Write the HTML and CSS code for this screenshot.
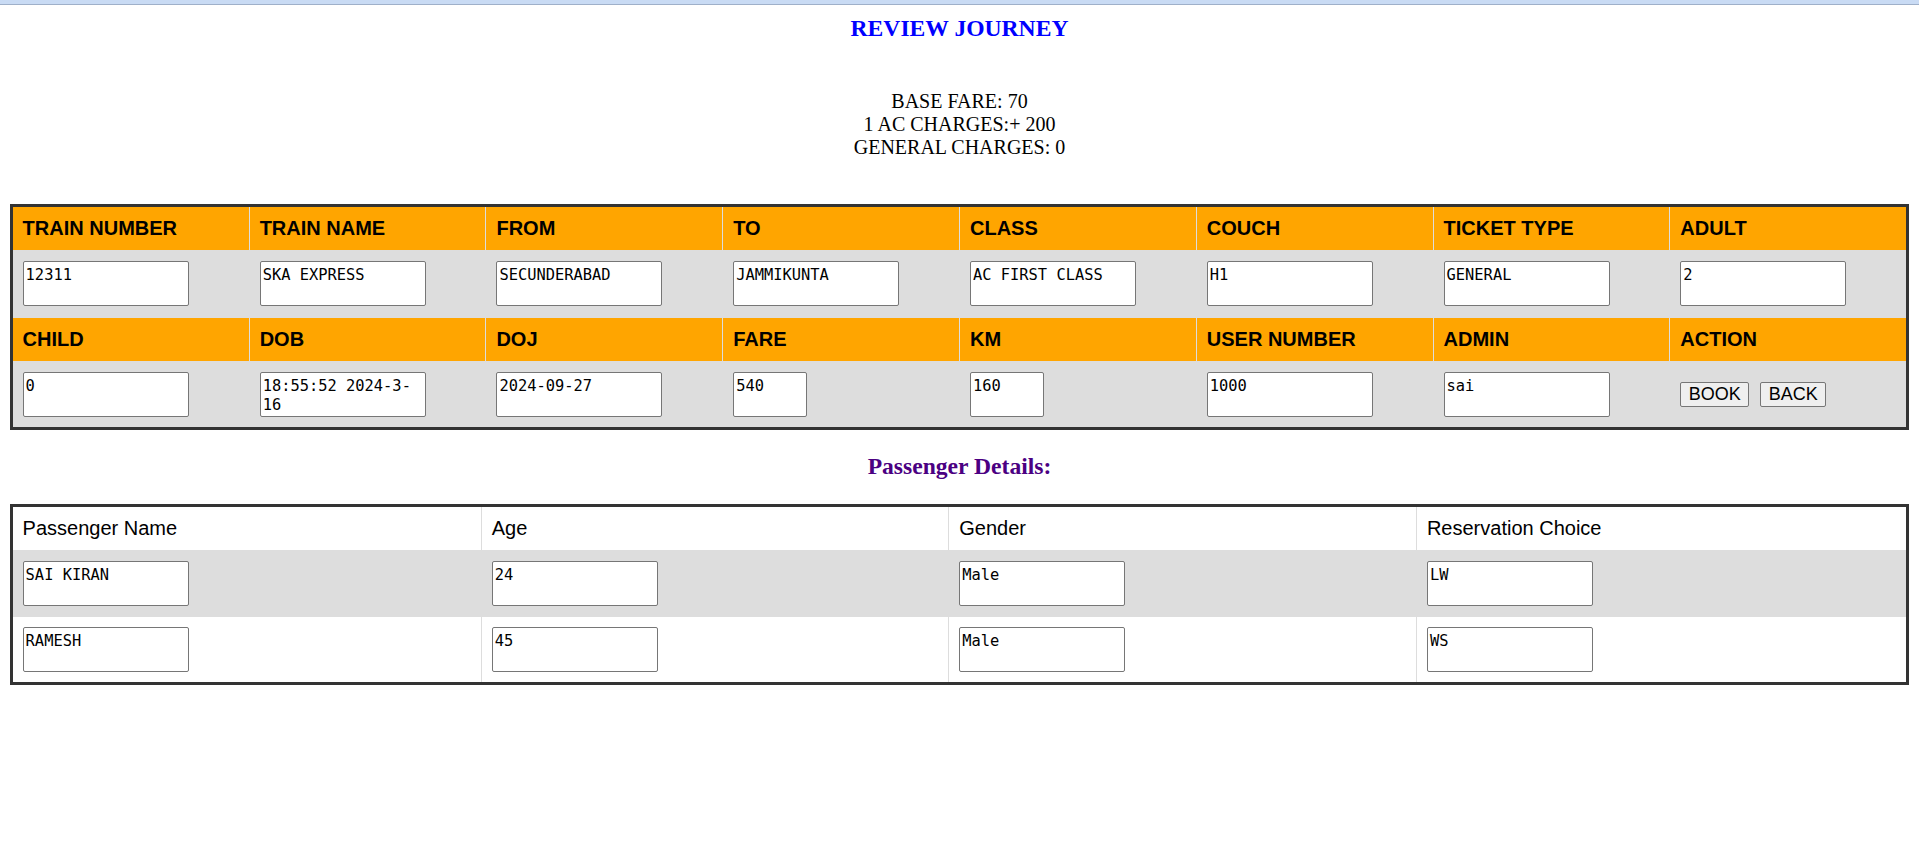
FILE: index.html
```html
<!DOCTYPE html>
<html lang="en">
<head>
<meta charset="utf-8">
<title>Review Journey</title>
<link rel="stylesheet" href="styles.css">
</head>
<body>
<div class="topbar"></div>
<h2 class="title">REVIEW JOURNEY</h2>
<div class="charges">BASE FARE: 70<br>1 AC CHARGES:+ 200<br>GENERAL CHARGES: 0</div>

<table class="grid journey">
  <tr class="head">
    <th>TRAIN NUMBER</th><th>TRAIN NAME</th><th>FROM</th><th>TO</th><th>CLASS</th><th>COUCH</th><th>TICKET TYPE</th><th>ADULT</th>
  </tr>
  <tr class="data">
    <td><textarea class="box" rows="2" cols="20">12311</textarea></td>
    <td><textarea class="box" rows="2" cols="20">SKA EXPRESS</textarea></td>
    <td><textarea class="box" rows="2" cols="20">SECUNDERABAD</textarea></td>
    <td><textarea class="box" rows="2" cols="20">JAMMIKUNTA</textarea></td>
    <td><textarea class="box" rows="2" cols="20">AC FIRST CLASS</textarea></td>
    <td><textarea class="box" rows="2" cols="20">H1</textarea></td>
    <td><textarea class="box" rows="2" cols="20">GENERAL</textarea></td>
    <td><textarea class="box" rows="2" cols="20">2</textarea></td>
  </tr>
  <tr class="head">
    <th>CHILD</th><th>DOB</th><th>DOJ</th><th>FARE</th><th>KM</th><th>USER NUMBER</th><th>ADMIN</th><th>ACTION</th>
  </tr>
  <tr class="data">
    <td><textarea class="box" rows="2" cols="20">0</textarea></td>
    <td><textarea class="box" rows="2" cols="20">18:55:52 2024-3-16</textarea></td>
    <td><textarea class="box" rows="2" cols="20">2024-09-27</textarea></td>
    <td><textarea class="box short" rows="2" cols="8">540</textarea></td>
    <td><textarea class="box short" rows="2" cols="8">160</textarea></td>
    <td><textarea class="box" rows="2" cols="20">1000</textarea></td>
    <td><textarea class="box" rows="2" cols="20">sai</textarea></td>
    <td><div class="actions"><button class="btn" type="button">BOOK</button><button class="btn" type="button">BACK</button></div></td>
  </tr>
</table>

<h2 class="sub">Passenger Details:</h2>

<table class="grid pass">
  <tr class="plainhead">
    <th>Passenger Name</th><th>Age</th><th>Gender</th><th>Reservation Choice</th>
  </tr>
  <tr class="shade">
    <td><textarea class="box" rows="2" cols="20">SAI KIRAN</textarea></td>
    <td><textarea class="box" rows="2" cols="20">24</textarea></td>
    <td><textarea class="box" rows="2" cols="20">Male</textarea></td>
    <td><textarea class="box" rows="2" cols="20">LW</textarea></td>
  </tr>
  <tr>
    <td><textarea class="box" rows="2" cols="20">RAMESH</textarea></td>
    <td><textarea class="box" rows="2" cols="20">45</textarea></td>
    <td><textarea class="box" rows="2" cols="20">Male</textarea></td>
    <td><textarea class="box" rows="2" cols="20">WS</textarea></td>
  </tr>
</table>
</body>
</html>
```

FILE: styles.css
```css
html, body {
  margin: 0;
  padding: 0;
  background: #ffffff;
}

body {
  font-family: "Liberation Serif", "Times New Roman", serif;
  color: #000;
}

.topbar {
  height: 4px;
  background: #c9dbf4;
  border-bottom: 1px solid #9fb0c9;
}

.title {
  margin: 10px 0 0;
  font-size: 23.6px;
  font-weight: bold;
  color: #0000ff;
  text-align: center;
  line-height: 27.6px;
}

.charges {
  margin-top: 47px;
  font-size: 20px;
  text-align: center;
  line-height: 23px;
}

.grid {
  width: 99%;
  margin: 0 auto;
  border-collapse: collapse;
  border: 3px solid #333333;
  font-family: "Liberation Sans", Arial, sans-serif;
}

.journey {
  margin-top: 45.5px;
}

.grid th,
.grid td {
  border: 1px solid #dddddd;
  padding: 10px;
  text-align: left;
  vertical-align: middle;
}

.journey .data td {
  padding-bottom: 10.5px;
}

.grid th {
  font-size: 20px;
  line-height: 23px;
}

.journey .head th {
  background: #ffa500;
  font-weight: bold;
  color: #000;
}

.journey .data td {
  background: #dddddd;
}

.pass .plainhead th {
  font-weight: normal;
  background: #ffffff;
}

.pass .shade td {
  background: #dddddd;
}

.box {
  display: block;
  box-sizing: border-box;
  width: 166px;
  height: 45px;
  margin: 0;
  padding: 4px 2px 1px;
  border: 1px solid #767676;
  border-radius: 2px;
  background: #ffffff;
  font-family: "DejaVu Sans Mono", "Liberation Mono", monospace;
  font-size: 15.4px;
  line-height: 19px;
  color: #000;
  resize: none;
  overflow: hidden;
}

.box.short {
  width: 74px;
}

.actions {
  display: flex;
  gap: 11px;
  align-items: center;
}

.btn {
  box-sizing: border-box;
  height: 25px;
  font-family: "Liberation Sans", Arial, sans-serif;
  font-size: 18px;
  line-height: 21px;
  padding: 0 7.5px;
  margin: 0;
  border: 1px solid #767676;
  border-radius: 2px;
  background: #efefef;
  color: #000;
}

.sub {
  margin: 23px 0;
  font-size: 23.6px;
  font-weight: bold;
  color: #4b0082;
  text-align: center;
  line-height: 27.6px;
}
```
